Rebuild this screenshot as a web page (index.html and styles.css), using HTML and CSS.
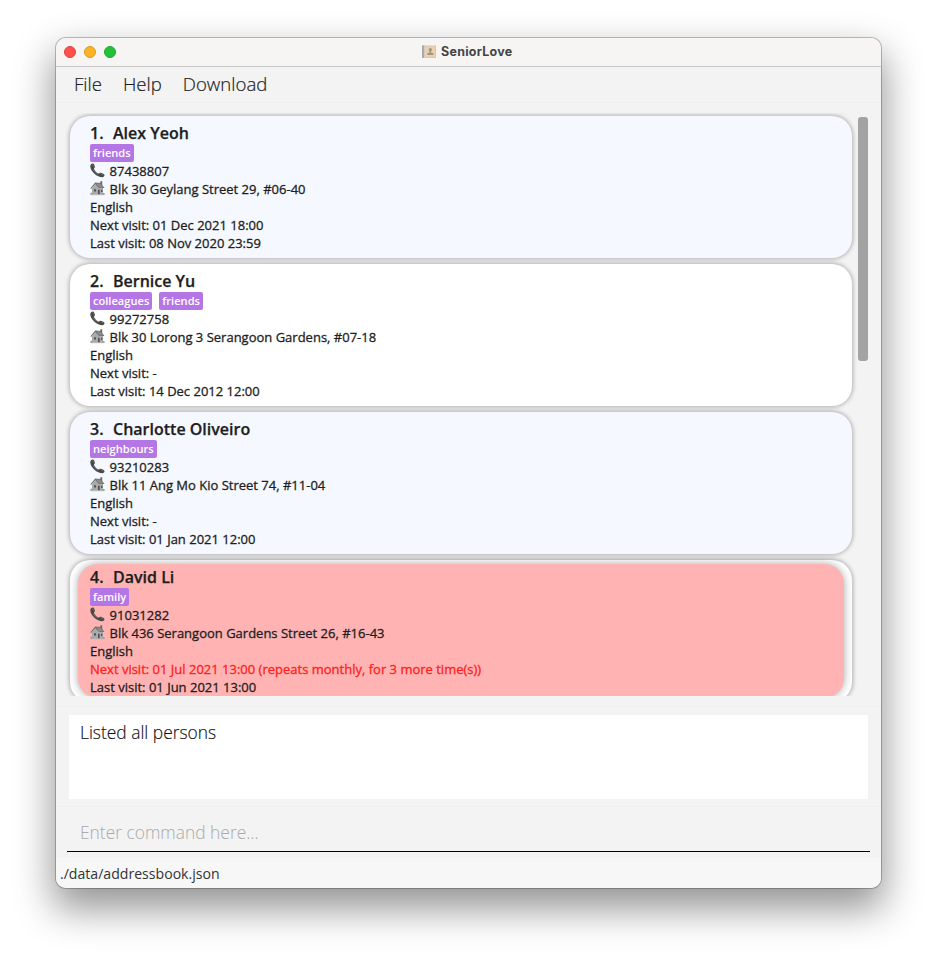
FILE: index.html
```html
<!DOCTYPE html>
<html lang="en">
<head>
<meta charset="utf-8">
<title>SeniorLove</title>
<link rel="stylesheet" href="styles.css">
</head>
<body>
<svg class="defs" aria-hidden="true">
  <symbol id="phone" viewBox="0 0 15 15">
    <path d="M.4 2.600C.7 1.300 2 .3 3.200.6c.9.5 1.600 2.300 1.700 3.300.1.8-1 1.200-.9 2 .5 1.600 2.500 3.700 4.200 4.600.8.3 1.400-.7 2.200-.7 1.300.1 3.400 1.200 4 2 .4.9-.6 2.200-2 2.400C7 14.200-.5 7.500.4 2.600z" fill="#484848"/>
    <path d="M2.500 1.400 4 3.900M10.700 10.700l2.700 1.400M3.200 6.300c.7 2 2.600 4 4.800 5" fill="none" stroke="#777" stroke-width=".7"/>
  </symbol>
  <symbol id="house" viewBox="0 0 15 15">
    <path d="M10.300.3h1.900v4h-1.900z" fill="#666"/>
    <path d="M2 7.500 5 3.500l8 3v6.900H2z" fill="#aaa"/>
    <path d="M.4 7.300 5.200 1.500l5.700.4 3.500 5.100H9.200L5.200 3.200 1.100 8z" fill="#707070"/>
    <path d="M6 2.500 10.500 2.700 13 6.300H9.300z" fill="#8c8c8c"/>
    <path d="M8 8.800h1.700v4.700H8z" fill="#555"/>
    <path d="M11 8.800h1.400v2.200H11zM4 8.300h2v2.200H4z" fill="#555"/>
    <path d="M.5 11.800h1.900v1.900H.5zM12.500 12h2v1.700h-2z" fill="#999"/>
    <path d="M.5 13.700h14" stroke="#aaa" stroke-width=".8"/>
  </symbol>
</svg>
<div class="window">
  <header class="titlebar">
    <div class="lights"><i class="light red"></i><i class="light amber"></i><i class="light green"></i></div>
    <svg class="app-icon" viewBox="0 0 14 14">
      <path d="M0 .5h14v12.500H0z" fill="#ddc7a6"/>
      <path d="M3.500 1.500h9.500v10.500H3.500z" fill="#ead1ad"/>
      <path d="M0 .5h2.500v12.500H0z" fill="#aaa"/>
      <path d="M2.500.5h1v12.500h-1z" fill="#ddd"/>
      <circle cx="8.300" cy="4.800" r="1.700" fill="#a09789"/>
      <path d="M7.600 5.500h1.400v2l2.300.8v1.700h-6V8.300L7.600 7.500z" fill="#a09789"/>
    </svg>
    <h1 class="title">SeniorLove</h1>
  </header>
  <nav class="menu"><span>File</span><span>Help</span><span>Download</span></nav>
  <main class="people">
    <div class="list">
      <article class="card tinted">
        <h2 class="name"><span class="index">1.</span>Alex Yeoh</h2>
        <div class="tags"><span class="tag">friends</span></div>
        <p class="row"><svg class="icon"><use href="#phone"/></svg>87438807</p>
        <p class="row"><svg class="icon"><use href="#house"/></svg>Blk 30 Geylang Street 29, #06-40</p>
        <p class="row">English</p>
        <p class="row">Next visit: 01 Dec 2021 18:00</p>
        <p class="row">Last visit: 08 Nov 2020 23:59</p>
      </article>
      <article class="card">
        <h2 class="name"><span class="index">2.</span>Bernice Yu</h2>
        <div class="tags"><span class="tag">colleagues</span><span class="tag">friends</span></div>
        <p class="row"><svg class="icon"><use href="#phone"/></svg>99272758</p>
        <p class="row"><svg class="icon"><use href="#house"/></svg>Blk 30 Lorong 3 Serangoon Gardens, #07-18</p>
        <p class="row">English</p>
        <p class="row">Next visit: -</p>
        <p class="row">Last visit: 14 Dec 2012 12:00</p>
      </article>
      <article class="card tinted">
        <h2 class="name"><span class="index">3.</span>Charlotte Oliveiro</h2>
        <div class="tags"><span class="tag">neighbours</span></div>
        <p class="row"><svg class="icon"><use href="#phone"/></svg>93210283</p>
        <p class="row"><svg class="icon"><use href="#house"/></svg>Blk 11 Ang Mo Kio Street 74, #11-04</p>
        <p class="row">English</p>
        <p class="row">Next visit: -</p>
        <p class="row">Last visit: 01 Jan 2021 12:00</p>
      </article>
      <article class="card framed">
        <div class="alert">
          <h2 class="name"><span class="index">4.</span>David Li</h2>
          <div class="tags"><span class="tag">family</span></div>
          <p class="row"><svg class="icon"><use href="#phone"/></svg>91031282</p>
          <p class="row"><svg class="icon"><use href="#house"/></svg>Blk 436 Serangoon Gardens Street 26, #16-43</p>
          <p class="row">English</p>
          <p class="row due">Next visit: 01 Jul 2021 13:00 (repeats monthly, for 3 more time(s))</p>
          <p class="row">Last visit: 01 Jun 2021 13:00</p>
        </div>
      </article>
    </div>
    <div class="scrollbar"></div>
  </main>
  <section class="result"><div class="result-box">Listed all persons</div></section>
  <section class="command"><div class="input">Enter command here...</div></section>
  <footer class="status">./data/addressbook.json</footer>
</div>
</body>
</html>
```
FILE: styles.css
```css
* { box-sizing: border-box; }
body { margin: 0; padding: 38px 56px 0; height: 962px; overflow: hidden; background: #fff; font-family: "Open Sans", "Noto Sans", sans-serif; color: #1e1e1e; }
.defs { position: absolute; width: 0; height: 0; }
h1, h2, p { margin: 0; }
.window { width: 825px; height: 850px; border-radius: 10px; overflow: hidden; background: #f3f3f3; display: flex; flex-direction: column; box-shadow: 0 0 0 1px rgba(0,0,0,.24), 0 18px 38px 3px rgba(0,0,0,.42); }
.titlebar { height: 29px; flex: none; display: grid; grid-template-columns: 366px 14px auto; column-gap: 0; align-items: center; background: #f6f5f3; border-bottom: 1px solid #c8c8c8; }
.lights { display: flex; gap: 8px; padding-left: 8px; }
.light { width: 12px; height: 12px; border-radius: 50%; }
.red { background: #ff5149; border: 1px solid #e0443e; }
.amber { background: #fdb224; border: 1px solid #dc9a24; }
.green { background: #24c138; border: 1px solid #1dab2d; }
.app-icon { width: 14px; height: 14px; }
.title { margin: -1px 0 0 5px; font: 700 12.500px/18px Inter, sans-serif; letter-spacing: .25px; color: #444; }
.menu { height: 36px; flex: none; display: flex; gap: 21px; padding-left: 18px; font-weight: 300; font-size: 18.600px; line-height: 33px; -webkit-text-stroke: .2px currentColor; }
.menu, .result { border-bottom: 1px solid #efefef; }
.people { height: 604px; flex: none; padding: 10px 13px 11px 8px; display: flex; justify-content: space-between; border-bottom: 1px solid #efefef; }
.list { width: 793px; height: 583px; overflow: hidden; padding: 3px 6px; display: flex; flex-direction: column; gap: 6px; }
.card { flex: none; height: 142px; width: 782px; border-radius: 20px; background: #fff; padding: 8px 20px 0; box-shadow: 0 0 4px 1px rgba(0,0,0,.28); }
.tinted { background: #f5f8ff; }
.framed { padding: 4px 8px 0; }
.alert { height: 134px; border-radius: 20px; padding: 4px 12px 0; background: #ffb3b3; box-shadow: 0 0 8px rgba(0,0,0,.35); }
.name { height: 20px; font-size: 16px; line-height: 19px; font-weight: 600; display: flex; -webkit-text-stroke: .25px currentColor; }
.index { width: 23px; }
.tags { height: 18px; display: flex; gap: 7px; }
.tag { height: 18px; padding: 0 3px; border-radius: 2px; background: #b576e5; color: #fff; font-size: 11.100px; line-height: 18px; font-weight: 600; }
.row { height: 18px; font-size: 13px; line-height: 18px; white-space: nowrap; display: flex; -webkit-text-stroke: .3px currentColor; }
.icon { width: 15px; height: 15px; margin: 1px 4.600px 0 0; -webkit-text-stroke: 0; }
.due { color: #ff2020; }
.scrollbar { width: 10px; height: 244px; margin-top: 4px; border-radius: 3px; background: #a3a3a3; }
.result { height: 100px; flex: none; padding: 8px 13px 7px; }
.result-box { height: 84px; padding: 5px 11px; background: #fff; font-size: 17.400px; line-height: 24px; font-weight: 300; color: #111; -webkit-text-stroke: .15px currentColor; }
.command { height: 51px; flex: none; padding: 7px 11px 6px; }
.input { height: 38px; padding: 0 13px; border-bottom: 1px solid #000; font-size: 17.400px; line-height: 37px; font-weight: 300; color: #aaa; }
.status { flex: 1; padding-left: 4px; background: #f7f7f7; font-size: 14.100px; line-height: 32px; color: #333; }
```
